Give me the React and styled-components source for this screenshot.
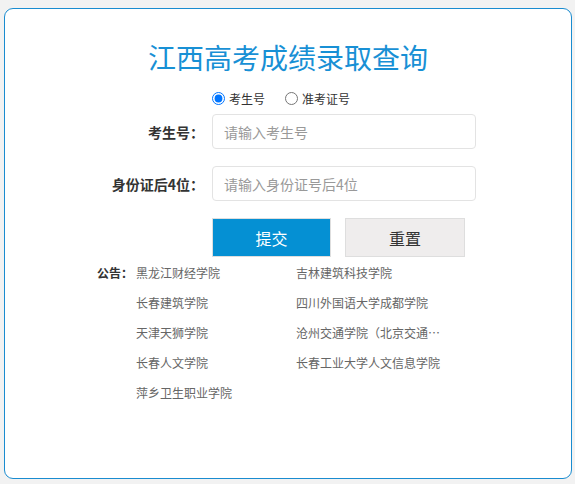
import React, { useState } from "react";
import styled, { createGlobalStyle } from "styled-components";

const GlobalStyle = createGlobalStyle`
  html, body {
    margin: 0;
    padding: 0;
    background: #f2f2f2;
  }
  body {
    font-family: "Microsoft YaHei", "Noto Sans CJK SC", "Liberation Sans", sans-serif;
  }
`;

const Page = styled.div`
  padding: 8px 3px 5px 4px;
`;

const Card = styled.div`
  box-sizing: border-box;
  height: 471px;
  background: #fff;
  border: 1px solid #1a8cd0;
  border-radius: 9px;
`;

const Title = styled.h1`
  margin: 28px 0 0;
  font-size: 28px;
  line-height: 40px;
  font-weight: 400;
  color: #1890d5;
  text-align: center;
`;

const RadioRow = styled.div`
  display: flex;
  align-items: center;
  height: 20px;
  margin-top: 11px;
  padding-left: 202px;
  font-size: 12px;
  color: #333;
`;

const RadioLabel = styled.label`
  display: flex;
  align-items: center;
  margin-right: 15px;
  cursor: pointer;

  input {
    width: 13px;
    height: 13px;
    margin: 0 4px 0 5px;
  }
`;

const Field = styled.div`
  display: flex;
  align-items: center;
  margin-top: ${({ $first }) => ($first ? "6px" : "17px")};
`;

const Label = styled.label`
  flex: none;
  width: 207px;
  padding-right: 8px;
  box-sizing: border-box;
  text-align: right;
  font-size: 14px;
  font-weight: 700;
  color: #333;
  white-space: nowrap;
`;

const Input = styled.input`
  box-sizing: border-box;
  width: 264px;
  height: 35px;
  padding: 0 11px;
  border: 1px solid #e3e3e3;
  border-radius: 4px;
  font-family: inherit;
  font-size: 14px;
  color: #333;
  outline: none;

  &::placeholder {
    color: #999;
  }
`;

const Actions = styled.div`
  display: flex;
  gap: 14px;
  margin-top: 17px;
  padding-left: 207px;
`;

const Button = styled.button`
  box-sizing: border-box;
  width: ${({ $primary }) => ($primary ? "119px" : "120px")};
  height: 39px;
  border: 1px solid #dedede;
  background: ${({ $primary }) => ($primary ? "#0590d3" : "#efeded")};
  color: ${({ $primary }) => ($primary ? "#fff" : "#333")};
  font-family: inherit;
  font-size: 16px;
  cursor: pointer;
`;

const Notice = styled.div`
  display: flex;
  margin-top: 1px;
  padding-left: 92px;
  font-size: 12px;
  line-height: 30px;
`;

const NoticeTitle = styled.div`
  width: 39px;
  font-weight: 700;
  color: #333;
`;

const NoticeList = styled.ul`
  display: grid;
  grid-template-columns: 160px 145px;
  margin: 0;
  padding: 0;
  list-style: none;
`;

const NoticeItem = styled.li`
  color: #666;
  white-space: nowrap;
  overflow: hidden;
  text-overflow: ellipsis;
  cursor: pointer;
`;

const schools = [
  "黑龙江财经学院",
  "吉林建筑科技学院",
  "长春建筑学院",
  "四川外国语大学成都学院",
  "天津天狮学院",
  "沧州交通学院（北京交通大学海滨学院）",
  "长春人文学院",
  "长春工业大学人文信息学院",
  "萍乡卫生职业学院",
];

export default function App() {
  const [mode, setMode] = useState("ksh");

  return (
    <>
      <GlobalStyle />
      <Page>
        <Card>
          <Title>江西高考成绩录取查询</Title>
          <RadioRow>
            <RadioLabel>
              <input
                type="radio"
                name="mode"
                checked={mode === "ksh"}
                onChange={() => setMode("ksh")}
              />
              考生号
            </RadioLabel>
            <RadioLabel>
              <input
                type="radio"
                name="mode"
                checked={mode === "zkz"}
                onChange={() => setMode("zkz")}
              />
              准考证号
            </RadioLabel>
          </RadioRow>
          <Field $first>
            <Label>{mode === "ksh" ? "考生号：" : "准考证号："}</Label>
            <Input placeholder={mode === "ksh" ? "请输入考生号" : "请输入准考证号"} />
          </Field>
          <Field>
            <Label>身份证后4位：</Label>
            <Input placeholder="请输入身份证号后4位" />
          </Field>
          <Actions>
            <Button $primary>提交</Button>
            <Button>重置</Button>
          </Actions>
          <Notice>
            <NoticeTitle>公告：</NoticeTitle>
            <NoticeList>
              {schools.map((s) => (
                <NoticeItem key={s}>{s}</NoticeItem>
              ))}
            </NoticeList>
          </Notice>
        </Card>
      </Page>
    </>
  );
}
